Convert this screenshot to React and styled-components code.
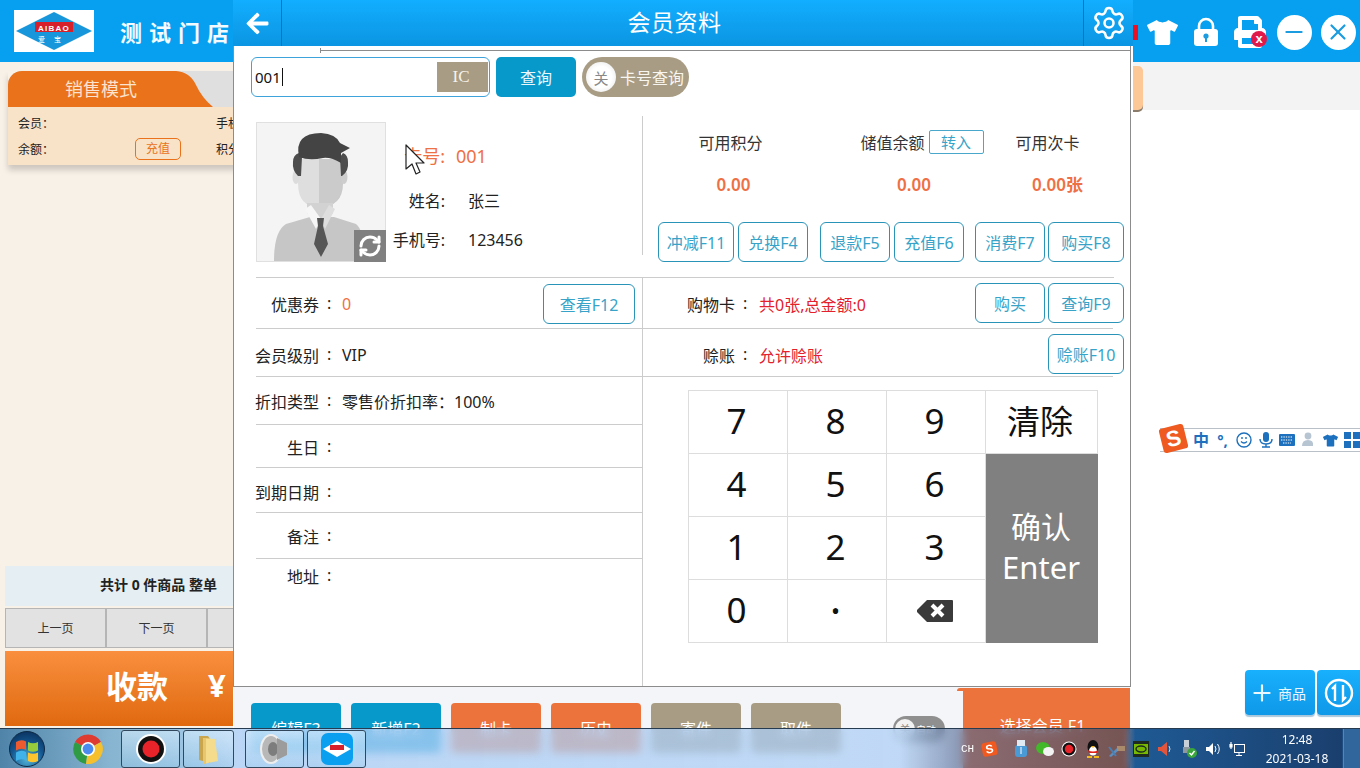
import React from 'react';
import styled, { createGlobalStyle } from 'styled-components';
import { FaArrowLeft, FaTshirt, FaPrint } from 'react-icons/fa';
import { Settings, Plus, X, Minus, RefreshCw } from 'lucide-react';

const SANS = `"Noto Sans", "Noto Sans CJK SC", sans-serif`;

const Global = createGlobalStyle`
  html, body { margin: 0; padding: 0; background: #fff; }
  * { box-sizing: border-box; }
  body { font-family: ${SANS}; }
`;

const Page = styled.div`
  position: relative; width: 1360px; height: 768px; overflow: hidden; background: #fff;
  display: flex; flex-direction: column;
`;

/* ---------- app header ---------- */
const AppHeader = styled.header`
  height: 62px; flex: none; background: #07a0f0; display: flex; align-items: center; padding-left: 14px;
`;
const LogoBox = styled.div`
  width: 80px; height: 42px; background: #fff; display: flex;
`;
const StoreName = styled.div`
  margin-left: 26px; color: #f4fbff; font-size: 22px; font-weight: 700; letter-spacing: 7px; line-height: 1; padding-top: 2px;
`;
const HeaderTools = styled.div`
  margin-left: auto; display: flex; align-items: center; height: 100%;
`;
const RedMark = styled.div`
  width: 5px; height: 15px; background: #ee0f22; margin-right: 2px;
  align-self: flex-start; margin-top: 25px;
`;
const ToolCell = styled.div`
  width: 44px; height: 100%; display: flex; align-items: center; justify-content: center; color: #fff; position: relative;
  padding-top: 2px;
`;
const PrintBadge = styled.span`
  position: absolute; right: 5px; bottom: 15px; width: 16px; height: 16px; border-radius: 50%;
  background: #e0194a; color: #fff; font: 700 13px/15px "Liberation Sans", sans-serif; text-align: center;
`;
const RoundBtn = styled.div`
  width: 35px; height: 35px; border-radius: 50%; background: #fff; color: #1b9be0;
  display: flex; align-items: center; justify-content: center;
`;

/* ---------- background body ---------- */
const AppBody = styled.div`
  flex: 1; display: flex; min-height: 0;
`;
const SalesPane = styled.div`
  width: 1133px; flex: none; background: #f8f1e8; padding: 9px 0 42px 0; display: flex; flex-direction: column;
`;
const ModeCard = styled.div`
  margin-left: 8px; width: 400px; box-shadow: 0 5px 6px rgba(0,0,0,.18);
`;
const ModeTabs = styled.div`
  display: flex; height: 36px; background: #dfdfdf; border-radius: 14px 0 0 0;
`;
const ModeTab = styled.div`
  width: 168px; background: #e9721a; border-radius: 14px 0 0 0; color: #fbe3cf; font-size: 18px; line-height: 36px;
  text-align: center; padding-left: 18px; white-space: nowrap;
`;
const ModeInfo = styled.div`
  background: #f8e3c8; height: 58px; padding: 3px 0 0 10px; display: grid; grid-template-columns: 198px 1fr; grid-auto-rows: 26px;
  align-items: center; font-size: 12px; color: #222;
`;
const ModeCell = styled.div`
  display: flex; align-items: center; width: 163px; justify-content: space-between;
`;
const TopUp = styled.span`
  width: 46px; height: 22px; border: 1px solid #e9721a; border-radius: 5px; color: #e9721a; text-align: center; line-height: 20px; font-size: 12px;
`;
const SalesFooter = styled.div`
  margin-top: auto; margin-left: 5px; width: 500px; display: flex; flex-direction: column;
`;
const TotalBar = styled.div`
  height: 40px; background: #e4eef3; font-size: 14px; font-weight: 700; color: #222; line-height: 38px; padding-left: 95px;
`;
const Pager = styled.div`
  display: flex; height: 40px; margin-top: 2px;
`;
const PagerBtn = styled.div`
  width: 101px; height: 100%; background: #e2e2e2; border: 1px solid #b5b5b5; color: #333; font-size: 12px;
  display: flex; align-items: center; justify-content: center;
`;
const PayBar = styled.div`
  margin-top: 3px; height: 75px; background: linear-gradient(#f98f3f, #e0690f); color: #fff; font-size: 31px; font-weight: 700;
  display: flex; align-items: center; padding: 0 0 8px 101px; gap: 40px;
`;
const SidePane = styled.div`
  flex: 1; position: relative; display: flex; flex-direction: column;
`;
const SideBand = styled.div`
  height: 48px; background: #f3f3f3;
`;
const BandTab = styled.div`
  width: 10px; height: 44px; margin-top: 4px; background: #fdc896; border-radius: 0 5px 5px 0; box-shadow: 0 2px 0 #8b7b6a;
`;
const FloatRow = styled.div`
  margin-top: auto; margin-bottom: 53px; margin-right: -8px; display: flex; justify-content: flex-end; gap: 2px;
`;
const FloatBtn = styled.div`
  width: ${p => p.$w}px; height: 45px; border-radius: 4px; background: linear-gradient(#18b0fd, #0f98e8);
  box-shadow: 0 2px 1px #a9c7dc; color: #eaf7ff; display: flex; align-items: center; justify-content: flex-start;
  padding-left: ${p => p.$pl || 7}px; font-size: 14px; gap: 3px;
`;
const ImeBar = styled.div`
  position: absolute; left: 27px; top: 366px; width: 240px; height: 24px; display: flex; align-items: center;
  border-top: 1px solid #b9c0c8; border-bottom: 1px solid #b9c0c8; background: #fff; padding-left: 33px; gap: 5.5px; color: #1c70bd;
  font-size: 15px; font-weight: 700;
`;
const ImeLogo = styled.div`
  position: absolute; left: 1px; top: -3px; width: 25px; height: 25px; background: #ee5a20; border-radius: 3px; transform: rotate(-14deg);
  color: #fff; font: 900 22px/25px "Liberation Sans", sans-serif; text-align: center;
`;
const ImeGlyph = styled.span`
  width: 16px; display: flex; justify-content: center; flex: none; font-size: ${p => p.$fs || 15}px; line-height: 1;
`;

/* ---------- modal ---------- */
const Modal = styled.div`
  position: absolute; left: 233px; top: 0; width: 900px; height: 768px; background: #fff; display: flex; flex-direction: column;
`;
const ModalHeader = styled.div`
  height: 46px; flex: none; display: flex; align-items: center; background: linear-gradient(#12aeff, #0b95e2); color: #fff;
`;
const HeaderCell = styled.div`
  width: ${p => p.$w}px; height: 100%; display: flex; align-items: center; justify-content: center;
  ${p => p.$side === 'l' ? 'border-right: 1px solid #0a76b8;' : 'border-left: 1px solid #0a76b8;'}
`;
const ModalTitle = styled.div`
  flex: 1; text-align: center; font-size: 23px; padding-right: 16px; letter-spacing: .5px; line-height: 1;
  padding-bottom: 1px;
`;
const ModalContent = styled.div`
  flex: 1; min-height: 0; width: 898px; border-left: 1px solid #8c8c8c; border-right: 1px solid #8c8c8c; border-bottom: 1px solid #8c8c8c;
  display: flex; flex-direction: column; position: relative;
`;
const TopRule = styled.div`
  margin-left: 86px; height: 5px; border-bottom: 1px solid #8c8c8c; flex: none; margin-right: -1px; position: relative;
  &::before { content: ""; position: absolute; left: 0; top: 2px; width: 1px; height: 5px; background: #8c8c8c; }
`;
const SearchRow = styled.div`
  display: flex; margin: 6px 0 0 17px; height: 40px; flex: none;
`;
const SearchBox = styled.div`
  width: 239px; height: 40px; border: 1px solid #3ea3da; border-radius: 6px; display: flex; align-items: center; padding: 0 1px 0 3px;
`;
const SearchText = styled.div`
  flex: 1; font-size: 15px; color: #111; display: flex; align-items: center;
`;
const Caret = styled.span`
  width: 1px; height: 18px; background: #111; margin-left: 1px;
`;
const IcBox = styled.div`
  width: 51px; height: 30px; background: #a89d84; color: #f5f2ea; font: 17px/30px "Liberation Serif", serif; text-align: center; padding-right: 3px;
`;
const QueryBtn = styled.div`
  width: 80px; height: 40px; margin-left: 6px; border-radius: 5px; background: #0899cb; color: #eaf7fb; font-size: 16px;
  display: flex; align-items: center; justify-content: center;
`;
const Toggle = styled.div`
  width: 107px; height: 40px; margin-left: 6px; border-radius: 20px; background: #a89d84; color: #f8f6f0; font-size: 16px;
  display: flex; align-items: center; padding-left: 4px; gap: 4px; white-space: nowrap;
`;
const ToggleKnob = styled.span`
  width: 30px; height: 30px; border-radius: 50%; background: radial-gradient(#fff 50%, #e1e1e1); color: #888; font-size: 15px;
  display: flex; align-items: center; justify-content: center; flex: none;
`;
const TopSection = styled.div`
  display: flex; height: 161px; margin-top: 19px; flex: none;
`;
const ProfileCol = styled.div`
  width: 409px; height: 139px; flex: none; border-right: 1px solid #ccc; padding: 6px 0 0 22px; display: flex;
`;
const Avatar = styled.div`
  position: relative; width: 130px; height: 140px; flex: none; background: #f4f4f4; border: 1px solid #e0e0e0;
`;
const AvatarSwap = styled.div`
  position: absolute; right: -1px; bottom: -1px; width: 32px; height: 32px; background: #808080; color: #fff;
  display: flex; align-items: center; justify-content: center;
`;
const ProfileInfo = styled.div`
  display: grid; grid-template-columns: 59px auto; align-content: start; column-gap: 23px; font-size: 16px; color: #222;
  padding-top: 18px;
`;
const InfoKey = styled.div`
  text-align: right; white-space: nowrap; height: ${p => p.$h}px; line-height: 30px;
  ${p => p.$hot && 'color: #ee7045; font-size: 18px; padding-top: 1px;'}
`;
const InfoVal = styled.div`
  height: ${p => p.$h}px; line-height: 30px; white-space: nowrap;
  ${p => p.$hot && 'color: #ee7045; font-size: 18px; margin-left: -12px; padding-top: 1px;'}
`;
const StatsCol = styled.div`
  flex: 1; display: flex; padding-left: 15px; gap: 11px;
`;
const StatGroup = styled.div`
  width: ${p => p.$w}px; display: flex; flex-direction: column; padding-top: 14px; position: relative; flex: none;
`;
const StatLabel = styled.div`
  height: 24px; font-size: 16px; color: #333; display: flex; align-items: center; justify-content: center; white-space: nowrap; gap: 4px;
  transform: translateX(${p => p.$dx || 0}px);
`;
const Transfer = styled.span`
  width: 55px; height: 24px; flex: none; border: 1px solid #4aa7cc; border-radius: 2px; color: #36a3c9; font-size: 15px; text-align: center; line-height: 22px;
`;
const StatValue = styled.div`
  height: 24px; margin-top: 19px; color: #ee7045; font-size: 17px; font-weight: 600; text-align: center; line-height: 24px;
  transform: translateX(${p => p.$dx || 0}px);
`;
const StatBtns = styled.div`
  display: flex; gap: ${p => p.$gap || 4}px; margin-top: 25px;
`;
const LineBtn = styled.div`
  width: ${p => p.$w}px; height: 40px; border: 1px solid #2a94b8; border-radius: 6px; color: #37a3c8; font-size: 16px; flex: none;
  display: flex; align-items: center; justify-content: center; white-space: nowrap; background: #fff;
`;
const LineBtnRight = styled(LineBtn).attrs({ $w: 92 })`
  margin-left: auto; margin-right: 7px;
`;
const Divider = styled.div`
  height: 1px; background: #ccc; margin-left: 22px; width: 858px; flex: none;
`;
const Columns = styled.div`
  flex: 1; display: flex; min-height: 0;
`;
const LeftCol = styled.div`
  width: 409px; flex: none; border-right: 1px solid #ccc; display: flex; flex-direction: column;
`;
const RightCol = styled.div`
  flex: 1; display: flex; flex-direction: column;
`;
const DetailRow = styled.div`
  height: ${p => p.$h}px; margin-left: 22px; display: flex; align-items: center; font-size: 16px; color: #222; flex: none;
  padding-top: ${p => p.$pt || 0}px; ${p => p.$last ? '' : 'border-bottom: 1px solid #ccc;'}
`;
const DetailLabel = styled.div`
  width: 75px; flex: none; white-space: nowrap; display: flex; justify-content: flex-end;
`;
const Colon = styled.span`
  margin-left: 8px; width: 4px;
`;
const DetailValue = styled.div`
  margin-left: 11px; white-space: nowrap; color: ${p => p.$c || '#222'};
`;
const SideRow = styled.div`
  height: ${p => p.$h}px; margin-right: 17px; display: flex; align-items: center; border-bottom: 1px solid #ccc; font-size: 16px; color: #222; flex: none;
`;
const SideLabel = styled.div`
  width: 104px; flex: none; display: flex; justify-content: flex-end; padding-top: ${p => p.$pt || 0}px;
`;
const SideValue = styled.div`
  margin-left: 12px; color: #e3202c; padding-top: ${p => p.$pt || 0}px; white-space: nowrap;
`;
const SideBtns = styled.div`
  margin-left: auto; margin-right: -11px; display: flex; gap: 3px; padding-top: ${p => p.$pt || 0}px;
`;
const Keypad = styled.div`
  margin: 13px 0 0 45px; width: 410px; height: 253px; display: grid; grid-template-columns: 99px 99px 99px 112px; grid-template-rows: repeat(4, 63px);
  border: 1px solid #ddd; border-width: 1px 0 0 1px;
`;
const Key = styled.div`
  border: 1px solid #ddd; border-width: 0 1px 1px 0; display: flex; align-items: center; justify-content: center; font-size: ${p => p.$fs || 35}px; color: #111;
  line-height: 1; padding: 0 3px ${p => p.$pb ?? 4}px 0;
`;
const ConfirmKey = styled.div`
  grid-column: 4; grid-row: 2 / span 3; background: #808080; color: #fff; display: flex; flex-direction: column; align-items: center; justify-content: center;
  font-size: 30px; line-height: 40px; padding: 0 2px 4px 0;
`;
const ConfirmEn = styled.span`
  font-size: 31px;
`;
const ModalFooter = styled.div`
  height: 81px; flex: none; display: flex; background: #f4f5f8; margin-left: 1px; margin-right: 3px; padding-left: 17px; position: relative;
`;
const FootBtns = styled.div`
  display: flex; gap: 10px; padding-top: 16px;
`;
const FootBtn = styled.div`
  width: 90px; height: 50px; border-radius: 4px; background: ${p => p.$bg}; color: #fff; font-size: 16px;
  display: flex; align-items: center; justify-content: center;
`;
const AutoToggle = styled.div`
  margin: 29px 0 0 52px; width: 52px; height: 26px; border-radius: 13px; background: #8f8f8f; display: flex; align-items: center; gap: 1px; padding-left: 2px;
  color: #fff; font-size: 10px; white-space: nowrap;
`;
const AutoKnob = styled.span`
  width: 20px; height: 20px; border-radius: 50%; background: #f2f2f2; color: #888; font-size: 11px; display: flex; align-items: center; justify-content: center; flex: none;
`;
const SelectBtn = styled.div`
  margin-left: auto; width: 167px; height: 80px; margin-top: 1px; background: #ec733b; color: #fff; font-size: 16px; text-align: center; padding: 25px 8px 0 0; position: relative;
  &::before { content: ""; position: absolute; left: -6px; top: 0; width: 6px; height: 3px; background: #ec733b; border-radius: 3px 0 0 0; }
`;
const Pointer = styled.svg`
  position: absolute; left: 171px; top: 98px;
`;

/* ---------- taskbar ---------- */
const Taskbar = styled.div`
  position: absolute; left: 0; right: 0; bottom: 0; height: 40px; display: flex; align-items: center; border-top: 1px solid #263a50;
  backdrop-filter: blur(4px);
  background: linear-gradient(90deg,
    rgba(70,125,165,.95) 0, rgba(125,175,205,.92) 110px, rgba(150,195,230,.9) 200px, rgba(172,206,245,.8) 235px, rgba(172,206,245,.72) 900px,
    rgba(80,105,150,.62) 955px, rgba(45,65,100,.62) 1125px, #1f5a94 1135px, #1a3f6e 1342px, #1f5a94 1343px);
`;
const StartOrb = styled.div`
  width: 36px; height: 36px; margin-left: 9px; flex: none;
`;
const ChromeSlot = styled.div`
  width: 30px; height: 30px; margin-left: 28px; flex: none;
`;
const TaskBtn = styled.div`
  width: ${p => p.$w}px; height: 38px; margin-left: ${p => p.$ml}px; flex: none; border: 1px solid #33475c; border-radius: 3px;
  background: linear-gradient(rgba(220,240,255,.55), rgba(150,200,235,.35)); display: flex; align-items: center; justify-content: center;
`;
const AppTile = styled.div`
  width: 32px; height: 32px; border-radius: 7px; background: #0b9ff0; display: flex; align-items: center; justify-content: center;
`;
const Tray = styled.div`
  margin-left: auto; display: flex; align-items: center; height: 100%;
`;
const TrayLang = styled.span`
  font: 11px "Liberation Mono", monospace; color: #fff; width: 21px;
`;
const TrayLogo = styled.span`
  width: 15px; height: 14px; background: #f0591f; border-radius: 3px; color: #fff; font: 900 12px/14px "Liberation Sans", sans-serif; text-align: center; margin-right: 12px; transform: rotate(-10deg);
`;
const TrayIcon = styled.span`
  width: 24px; height: 18px; display: flex; align-items: center; justify-content: center; flex: none;
`;
const Clock = styled.div`
  width: 92px; margin-left: 2px; text-align: center; color: #fff; font-size: 12px; line-height: 19px; font-family: "Noto Sans", sans-serif;
`;
const ShowDesktop = styled.div`
  width: 17px; height: 100%; border-left: 1px solid #5f82a8; background: rgba(255,255,255,.08); flex: none;
`;

/* ---------- drawings ---------- */
const Logo = () => (
  <svg width="80" height="42" viewBox="0 0 80 42">
    <polygon points="2,21 40,2 78,21 40,40" fill="#1796dc" />
    <rect x="21" y="12" width="38" height="10" fill="#d8202a" />
    <text x="40" y="20.5" textAnchor="middle" fontSize="8" fontWeight="700" fill="#fff" letterSpacing="1.2" fontFamily="Liberation Sans, sans-serif">AIBAO</text>
    <text x="40" y="32" textAnchor="middle" fontSize="7" fill="#fff" letterSpacing="9" fontFamily="Noto Sans CJK SC, sans-serif">爱宝</text>
  </svg>
);
const LockIcon = () => (
  <svg width="26" height="30" viewBox="0 0 26 30">
    <path d="M6 13V9a7 7 0 0 1 14 0v4" fill="none" stroke="#fff" strokeWidth="2.6" />
    <rect x="1" y="12" width="24" height="17" rx="3" fill="#fff" />
    <circle cx="13" cy="19" r="2.6" fill="#1b9be0" />
    <rect x="12" y="20" width="2" height="5" fill="#1b9be0" />
  </svg>
);
const AvatarArt = () => (
  <svg width="128" height="138" viewBox="0 0 128 138">
    <path d="M17 138q0-30 12-37l24-7h24l22 7q8 6 10 37z" fill="#c6c6c6" />
    <path d="M50 74h12v34z" fill="#d4d4d4" />
    <path d="M50 76h12v28z" fill="#dadada" />
    <path d="M62 60h24q0 24-24 24z" fill="#c9c9c9" />
    <path d="M41 36h21v48q-21 0-21-24z" fill="#dedede" />
    <path d="M62 36h23v24q0 24-23 24z" fill="#cbcbcb" />
    <path d="M50 80h26v10l-13 10-13-10z" fill="#d2d2d2" />
    <ellipse cx="39" cy="54" rx="3.5" ry="7" fill="#dcdcdc" />
    <ellipse cx="87" cy="54" rx="3.5" ry="7" fill="#cdcdcd" />
    <path d="M48 86l6-4 10 14-5 10z" fill="#f6f6f6" />
    <path d="M78 86l-6-4-8 14 4 10z" fill="#dedede" />
    <path d="M60 95h7l-1 8 5 18-7 13-7-13 4-18z" fill="#565656" />
    <path d="M41 53q-6-6-5-14 0-7 6-9l3 4-1 19zM85 53q7-5 6-14 0-7-5-9l-3 4 1 19z" fill="#4d4d4d" />
    <path d="M42 34q-5-24 22-24 15 1 19 10l10 5-9 5v10q-10-6-18-5-14 3-24-1z" fill="#444" />
  </svg>
);
const Backspace = () => (
  <svg width="38" height="24" viewBox="0 0 38 24">
    <path d="M11 1h25a1 1 0 0 1 1 1v20a1 1 0 0 1-1 1H11L1 13v-2z" fill="#3a3a3a" />
    <path d="M16 6l11 11M27 6L16 17" stroke="#fff" strokeWidth="4" />
  </svg>
);
const UpDownCircle = () => (
  <svg width="30" height="30" viewBox="0 0 30 30" fill="none" stroke="#fff" strokeWidth="2.4">
    <circle cx="15" cy="15" r="13" />
    <path d="M11 23V8L8 11M19 7v15l3-3" />
  </svg>
);
const WinOrb = () => (
  <svg width="36" height="36" viewBox="0 0 36 36">
    <defs>
      <radialGradient id="orb" cy=".8" r=".85"><stop offset="0" stopColor="#4fb2d8" /><stop offset=".55" stopColor="#14568f" /><stop offset="1" stopColor="#0a2f5a" /></radialGradient>
    </defs>
    <circle cx="18" cy="18" r="17.5" fill="url(#orb)" stroke="#0e2b47" />
    <path d="M7 11q5-3 10-.5v8.5q-5-2.5-10 .5z" fill="#ee5a30" />
    <path d="M19 11q5 2.5 10 0v8.5q-5 2.5-10 0z" fill="#96cc3c" />
    <path d="M7 21.5q5-3 10-.5v8.5q-5-2.5-10 .5z" fill="#3fb3ea" />
    <path d="M19 21.5q5 2.5 10 0v8.5q-5 2.5-10 0z" fill="#fcc42f" />
  </svg>
);
const Chrome = () => (
  <svg width="30" height="30" viewBox="0 0 30 30">
    <path d="M15 15L2 8a15 15 0 0 1 26 0z" fill="#df3b31" />
    <path d="M15 15L2 8a15 15 0 0 0 11 22z" fill="#2f9c45" />
    <path d="M15 15l13-7a15 15 0 0 1-15 22z" fill="#f6c02d" />
    <circle cx="15" cy="15" r="7" fill="#fff" />
    <circle cx="15" cy="15" r="5.4" fill="#4a8bf0" />
  </svg>
);
const RecordIcon = ({ s = 32 }) => (
  <svg width={s} height={s} viewBox="0 0 32 32">
    <circle cx="16" cy="16" r="15" fill="#fff" />
    <circle cx="16" cy="16" r="13" fill="#111" />
    <circle cx="16" cy="16" r="8.5" fill="#e8232a" />
  </svg>
);
const Folder = () => (
  <svg width="24" height="32" viewBox="0 0 24 32">
    <path d="M2 3h9l2 3v24l-11-3z" fill="#c9a64d" />
    <path d="M6 5l12 1 3 22-15 3z" fill="#f5dc8c" />
    <path d="M6 5l3 0 0 26-3 0z" fill="#e7c66e" />
  </svg>
);
const Speaker = () => (
  <svg width="32" height="32" viewBox="0 0 32 32">
    <ellipse cx="12" cy="16" rx="10" ry="14" fill="#b8b8b8" stroke="#eee" strokeWidth="2" />
    <ellipse cx="14" cy="16" rx="5" ry="7" fill="#7d7d7d" />
    <path d="M18 5l10 5v12l-10 5z" fill="#9c9c9c" />
  </svg>
);
const AppMini = () => (
  <svg width="30" height="18" viewBox="0 0 30 18">
    <polygon points="1,9 15,1 29,9 15,17" fill="#fff" />
    <rect x="8" y="5" width="14" height="5" fill="#d8202a" />
  </svg>
);
const TrayUsb = () => (
  <svg width="16" height="18" viewBox="0 0 16 18"><rect x="2" y="5" width="12" height="12" rx="3" fill="#4a9ad6" /><rect x="4" y="0" width="8" height="6" fill="#dfe9f2" /><path d="M8 7v7" stroke="#fff" /></svg>
);
const TrayWechat = () => (
  <svg width="18" height="16" viewBox="0 0 18 16"><ellipse cx="7" cy="7" rx="7" ry="6" fill="#42b72a" /><ellipse cx="12.5" cy="10.5" rx="5.5" ry="4.5" fill="#f3f3f3" /></svg>
);
const TrayQQ = () => (
  <svg width="16" height="18" viewBox="0 0 16 18"><ellipse cx="8" cy="7" rx="5.5" ry="7" fill="#111" /><ellipse cx="8" cy="11" rx="4" ry="4.5" fill="#fff" /><path d="M3 10q5 3 10 0l-1 3H4z" fill="#e2231a" /><path d="M6 6h4l-2 2z" fill="#f6b91b" /><path d="M2 16h5v2H2zM9 16h5v2H9z" fill="#f6b91b" /></svg>
);
const TrayTool = () => (
  <svg width="18" height="16" viewBox="0 0 18 16"><path d="M1 15L9 7l2 2-8 7z" fill="#5c8fbf" /><path d="M1 6l7 9" stroke="#4b7fb0" strokeWidth="2" /><rect x="9" y="5" width="8" height="5" fill="#a98a6a" /></svg>
);
const TrayNvidia = () => (
  <svg width="16" height="16" viewBox="0 0 16 16"><rect width="16" height="16" fill="#1e2b20" /><rect x="1" y="3" width="14" height="10" fill="#76b900" /><ellipse cx="8" cy="8" rx="5" ry="3" fill="none" stroke="#1e2b20" strokeWidth="1.4" /></svg>
);
const TrayMute = () => (
  <svg width="16" height="16" viewBox="0 0 16 16"><path d="M1 6h3l6-5v14l-6-5H1z" fill="#e2553d" /><path d="M12 5q2 3 0 6" stroke="#c9d6e2" fill="none" /></svg>
);
const TraySafe = () => (
  <svg width="16" height="18" viewBox="0 0 16 18"><rect x="3" y="0" width="5" height="8" fill="#c9d0d8" /><rect x="2" y="7" width="7" height="6" fill="#8f979f" /><circle cx="11" cy="13" r="5" fill="#3aa53a" /><path d="M8.5 13l2 2 3-4" stroke="#fff" fill="none" strokeWidth="1.4" /></svg>
);
const TrayVolume = () => (
  <svg width="16" height="16" viewBox="0 0 16 16"><path d="M1 6h3l4-4v12l-4-4H1z" fill="#fff" /><path d="M10 5q2 3 0 6M12.5 3q3.5 5 0 10" stroke="#fff" fill="none" /></svg>
);
const TrayNet = () => (
  <svg width="16" height="16" viewBox="0 0 16 16" fill="none" stroke="#fff"><rect x="5.5" y="3.5" width="10" height="8" /><path d="M10 11.5v3M7 14.5h6" /><path d="M2 1v7M1 3v3h2V3" strokeWidth="1.2" /></svg>
);

const App = () => (
  <Page>
    <Global />
    <AppHeader>
      <LogoBox><Logo /></LogoBox>
      <StoreName>测试门店</StoreName>
      <HeaderTools>
        <RedMark />
        <ToolCell><FaTshirt size={31} /></ToolCell>
        <ToolCell><LockIcon /></ToolCell>
        <ToolCell><FaPrint size={32} /><PrintBadge>x</PrintBadge></ToolCell>
        <ToolCell><RoundBtn><Minus size={26} strokeWidth={2} /></RoundBtn></ToolCell>
        <ToolCell><RoundBtn><X size={26} strokeWidth={2} /></RoundBtn></ToolCell>
      </HeaderTools>
    </AppHeader>

    <AppBody>
      <SalesPane>
        <ModeCard>
          <ModeTabs>
            <ModeTab>销售模式</ModeTab>
            <svg width="37" height="36" viewBox="0 0 37 36"><path d="M0 0q14 1 20 14t17 22H0z" fill="#e9721a" /></svg>
          </ModeTabs>
          <ModeInfo>
            <ModeCell>会员：</ModeCell>
            <ModeCell>手机号：</ModeCell>
            <ModeCell>余额：<TopUp>充值</TopUp></ModeCell>
            <ModeCell>积分：</ModeCell>
          </ModeInfo>
        </ModeCard>
        <SalesFooter>
          <TotalBar>共计 0 件商品 整单</TotalBar>
          <Pager>
            <PagerBtn>上一页</PagerBtn>
            <PagerBtn>下一页</PagerBtn>
            <PagerBtn>整单</PagerBtn>
          </Pager>
          <PayBar><span>收款</span><span>¥</span></PayBar>
        </SalesFooter>
      </SalesPane>
      <SidePane>
        <SideBand><BandTab /></SideBand>
        <ImeBar>
          <ImeLogo>S</ImeLogo>
          <ImeGlyph $fs={16}>中</ImeGlyph>
          <ImeGlyph>°,</ImeGlyph>
          <ImeGlyph>
            <svg width="16" height="16" viewBox="0 0 16 16" fill="none" stroke="#1c70bd" strokeWidth="1.4"><circle cx="8" cy="8" r="7" /><path d="M5 9.5q3 3 6 0M6 5v2M10 5v2" /></svg>
          </ImeGlyph>
          <ImeGlyph>
            <svg width="14" height="16" viewBox="0 0 14 16" fill="#1c70bd"><rect x="4" y="0" width="6" height="10" rx="3" /><path d="M1 7q0 5 6 5t6-5M7 12v3M3 15h8" fill="none" stroke="#1c70bd" strokeWidth="1.4" /></svg>
          </ImeGlyph>
          <ImeGlyph>
            <svg width="16" height="12" viewBox="0 0 16 12"><rect width="16" height="12" rx="1" fill="#1c70bd" /><path d="M2 3h12M2 6h12M4 9h8" stroke="#fff" strokeDasharray="1.4 1" /></svg>
          </ImeGlyph>
          <ImeGlyph>
            <svg width="16" height="16" viewBox="0 0 16 16" fill="#b7c4d2"><circle cx="7" cy="4" r="3.4" /><path d="M1 14q0-6 6-6t5 6z" /></svg>
          </ImeGlyph>
          <ImeGlyph><FaTshirt size={15} /></ImeGlyph>
          <ImeGlyph>
            <svg width="16" height="16" viewBox="0 0 16 16" fill="#1c70bd"><rect width="7" height="7" /><rect x="9" width="7" height="7" /><rect y="9" width="7" height="7" /><rect x="9" y="9" width="7" height="7" /></svg>
          </ImeGlyph>
        </ImeBar>
        <FloatRow>
          <FloatBtn $w={70} $pl={4}><Plus size={26} strokeWidth={2} />商品</FloatBtn>
          <FloatBtn $w={51}><UpDownCircle /></FloatBtn>
        </FloatRow>
      </SidePane>
    </AppBody>

    <Modal>
      <ModalHeader>
        <HeaderCell $w={49} $side="l"><FaArrowLeft size={25} /></HeaderCell>
        <ModalTitle>会员资料</ModalTitle>
        <HeaderCell $w={50} $side="r"><Settings size={36} strokeWidth={1.7} /></HeaderCell>
      </ModalHeader>
      <ModalContent>
        <TopRule />
        <SearchRow>
          <SearchBox>
            <SearchText>001<Caret /></SearchText>
            <IcBox>IC</IcBox>
          </SearchBox>
          <QueryBtn>查询</QueryBtn>
          <Toggle><ToggleKnob>关</ToggleKnob>卡号查询</Toggle>
        </SearchRow>
        <TopSection>
          <ProfileCol>
            <Avatar>
              <AvatarArt />
              <AvatarSwap><RefreshCw size={24} strokeWidth={3} /></AvatarSwap>
            </Avatar>
            <ProfileInfo>
              <InfoKey $h={46} $hot>卡号:</InfoKey><InfoVal $h={46} $hot>001</InfoVal>
              <InfoKey $h={39}>姓名:</InfoKey><InfoVal $h={39}>张三</InfoVal>
              <InfoKey $h={39}>手机号:</InfoKey><InfoVal $h={39}>123456</InfoVal>
            </ProfileInfo>
          </ProfileCol>
          <StatsCol>
            <StatGroup $w={151}>
              <StatLabel $dx={-3}>可用积分</StatLabel>
              <StatValue>0.00</StatValue>
              <StatBtns><LineBtn $w={76}>冲减F11</LineBtn><LineBtn $w={70}>兑换F4</LineBtn></StatBtns>
            </StatGroup>
            <StatGroup $w={144}>
              <StatLabel $dx={30}>储值余额<Transfer>转入</Transfer></StatLabel>
              <StatValue $dx={22}>0.00</StatValue>
              <StatBtns><LineBtn $w={70}>退款F5</LineBtn><LineBtn $w={70}>充值F6</LineBtn></StatBtns>
            </StatGroup>
            <StatGroup $w={149}>
              <StatLabel $dx={-2}>可用次卡</StatLabel>
              <StatValue $dx={8}>0.00张</StatValue>
              <StatBtns $gap={3}><LineBtn $w={70}>消费F7</LineBtn><LineBtn $w={76}>购买F8</LineBtn></StatBtns>
            </StatGroup>
          </StatsCol>
        </TopSection>
        <Divider />
        <Columns>
          <LeftCol>
            <DetailRow $h={51} $pt={1}>
              <DetailLabel>优惠券<Colon>:</Colon></DetailLabel>
              <DetailValue $c="#ee7045">0</DetailValue>
              <LineBtnRight>查看F12</LineBtnRight>
            </DetailRow>
            <DetailRow $h={48} $pt={4}>
              <DetailLabel>会员级别<Colon>:</Colon></DetailLabel><DetailValue>VIP</DetailValue>
            </DetailRow>
            <DetailRow $h={48}>
              <DetailLabel>折扣类型<Colon>:</Colon></DetailLabel><DetailValue>零售价折扣率：100%</DetailValue>
            </DetailRow>
            <DetailRow $h={43} $pt={2}>
              <DetailLabel>生日<Colon>:</Colon></DetailLabel>
            </DetailRow>
            <DetailRow $h={45} $pt={3}>
              <DetailLabel>到期日期<Colon>:</Colon></DetailLabel>
            </DetailRow>
            <DetailRow $h={46} $pt={1}>
              <DetailLabel>备注<Colon>:</Colon></DetailLabel>
            </DetailRow>
            <DetailRow $h={34} $last>
              <DetailLabel>地址<Colon>:</Colon></DetailLabel>
            </DetailRow>
          </LeftCol>
          <RightCol>
            <SideRow $h={51}>
              <SideLabel $pt={1}>购物卡<Colon>:</Colon></SideLabel>
              <SideValue $pt={1}>共0张,总金额:0</SideValue>
              <SideBtns><LineBtn $w={70}>购买</LineBtn><LineBtn $w={76}>查询F9</LineBtn></SideBtns>
            </SideRow>
            <SideRow $h={48}>
              <SideLabel $pt={4}>赊账<Colon>:</Colon></SideLabel>
              <SideValue $pt={4}>允许赊账</SideValue>
              <SideBtns $pt={2}><LineBtn $w={76}>赊账F10</LineBtn></SideBtns>
            </SideRow>
            <Keypad>
              <Key>7</Key><Key>8</Key><Key>9</Key><Key $fs={33} $pb={2}>清除</Key>
              <Key>4</Key><Key>5</Key><Key>6</Key>
              <ConfirmKey>确认<ConfirmEn>Enter</ConfirmEn></ConfirmKey>
              <Key>1</Key><Key>2</Key><Key>3</Key>
              <Key>0</Key><Key $fs={24} $pb={0}>•</Key><Key $pb={0}><Backspace /></Key>
            </Keypad>
          </RightCol>
        </Columns>
        <Pointer width="22" height="32" viewBox="0 0 22 32">
          <path d="M1 1v24l6-5 4 10 4-2-4-9h8z" fill="#fff" stroke="#222" strokeWidth="1.2" strokeLinejoin="round" />
        </Pointer>
      </ModalContent>
      <ModalFooter>
        <FootBtns>
          <FootBtn $bg="#0899cb">编辑F3</FootBtn>
          <FootBtn $bg="#0899cb">新增F2</FootBtn>
          <FootBtn $bg="#ec733b">制卡</FootBtn>
          <FootBtn $bg="#ec733b">历史</FootBtn>
          <FootBtn $bg="#a89d84">寄件</FootBtn>
          <FootBtn $bg="#a89d84">取件</FootBtn>
        </FootBtns>
        <AutoToggle><AutoKnob>关</AutoKnob>自动</AutoToggle>
        <SelectBtn>选择会员 F1</SelectBtn>
      </ModalFooter>
    </Modal>

    <Taskbar>
      <StartOrb><WinOrb /></StartOrb>
      <ChromeSlot><Chrome /></ChromeSlot>
      <TaskBtn $w={59} $ml={18}><RecordIcon /></TaskBtn>
      <TaskBtn $w={51} $ml={3}><Folder /></TaskBtn>
      <TaskBtn $w={59} $ml={11}><Speaker /></TaskBtn>
      <TaskBtn $w={59} $ml={3}><AppTile><AppMini /></AppTile></TaskBtn>
      <Tray>
        <TrayLang>CH</TrayLang>
        <TrayLogo>S</TrayLogo>
        <TrayIcon><TrayUsb /></TrayIcon>
        <TrayIcon><TrayWechat /></TrayIcon>
        <TrayIcon><RecordIcon s={16} /></TrayIcon>
        <TrayIcon><TrayQQ /></TrayIcon>
        <TrayIcon><TrayTool /></TrayIcon>
        <TrayIcon><TrayNvidia /></TrayIcon>
        <TrayIcon><TrayMute /></TrayIcon>
        <TrayIcon><TraySafe /></TrayIcon>
        <TrayIcon><TrayVolume /></TrayIcon>
        <TrayIcon><TrayNet /></TrayIcon>
        <Clock>12:48<br />2021-03-18</Clock>
        <ShowDesktop />
      </Tray>
    </Taskbar>
  </Page>
);

export default App;
